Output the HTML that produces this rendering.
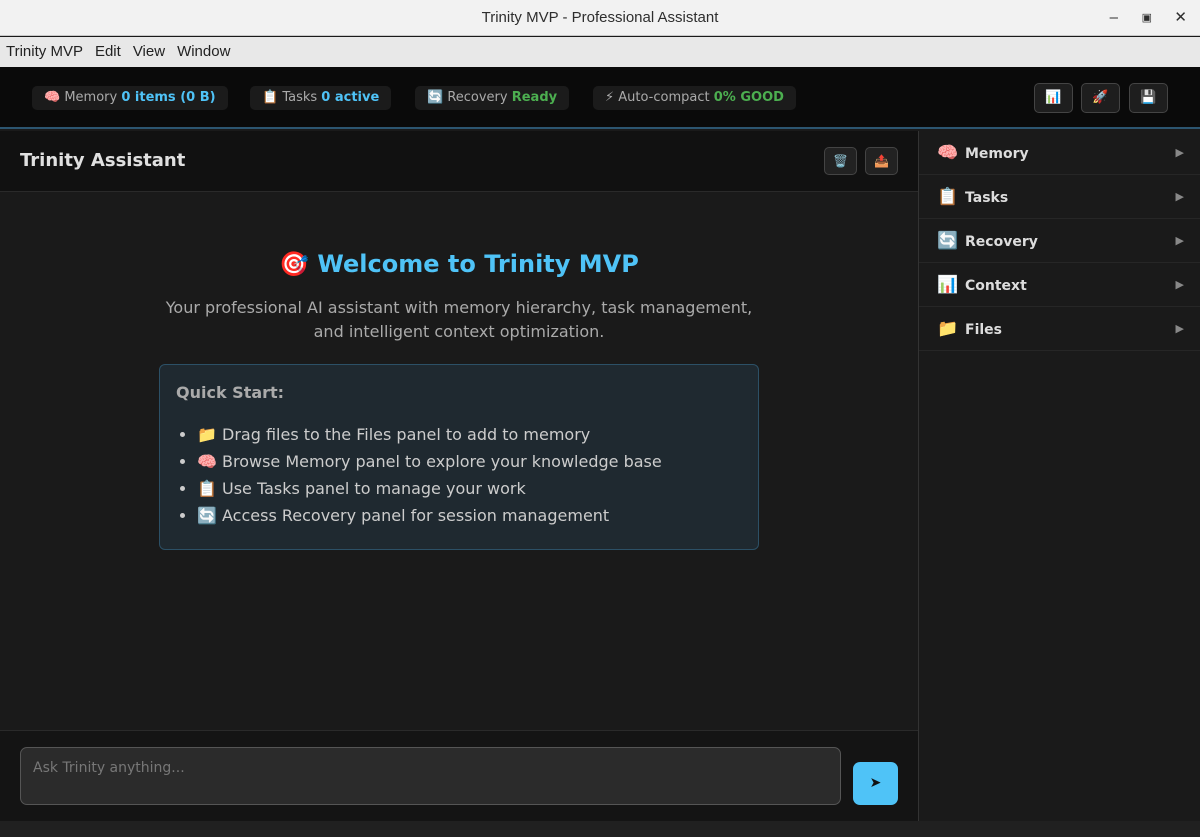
<!DOCTYPE html>
<html><head><meta charset="utf-8"><style>
*{box-sizing:border-box;margin:0;padding:0}
body{width:1200px;height:837px;overflow:hidden;background:#1a1a1a;font-family:"DejaVu Sans","Liberation Sans",sans-serif;position:relative}
.a{position:absolute}
.tb{left:0;top:0;width:1200px;height:36px;background:#f2f2f2;border-bottom:1px solid #c8c8c8;font-family:"Liberation Sans",sans-serif;font-size:15px;color:#2e2e2e;text-align:center;line-height:36px}
.mb{left:0;top:37px;width:1200px;height:30px;background:#e8e8e8;font-family:"Liberation Sans",sans-serif;font-size:15px;color:#222;line-height:30px;padding-left:6px}
.mb span{margin-right:12px}
.hd{left:0;top:67px;width:1200px;height:62px;background:#0a0a0a;border-bottom:2px solid #2c5570}
.pill{top:19px;height:24px;background:#1b1b1b;border-radius:5px;font-size:13px;color:#aaa;line-height:24px;padding:0 12px;white-space:nowrap}
.b{color:#4fc3f7;font-weight:bold}.g{color:#4caf50;font-weight:bold}
.hb{top:16px;width:39px;height:30px;border:1px solid #444;border-radius:5px;background:#1e1e1e;font-size:13px;text-align:center;line-height:28px}
.ch{left:0;top:131px;width:918px;height:61px;background:#111;border-bottom:1px solid #2a2a2a}
.sb{left:918px;top:131px;width:282px;height:690px;background:#1a1a1a;border-left:1px solid #333}
.it{height:44px;border-bottom:1px solid #262626;font-size:14px;font-weight:bold;color:#ddd;line-height:44px;padding-left:18px;position:relative}
.it em{font-style:normal;display:inline-block;width:28px;font-size:17px;font-weight:normal}
.it i{font-style:normal;position:absolute;right:16px;color:#888;font-size:11px}
.sm{width:33px;height:28px;border:1px solid #444;border-radius:5px;background:#222;top:16px;font-size:12px;text-align:center;line-height:26px}
</style></head><body>
<div class="a tb">Trinity MVP - Professional Assistant
<span style="position:absolute;right:82px;top:0">–</span><span style="position:absolute;right:48px;top:0;font-size:11px">▣</span><span style="position:absolute;right:13px;top:0">✕</span></div>
<div class="a mb"><span>Trinity MVP</span><span>Edit</span><span>View</span><span>Window</span></div>
<div class="a hd">
<div class="a pill" style="left:32px">🧠 Memory <span class="b">0 items (0 B)</span></div>
<div class="a pill" style="left:250px">📋 Tasks <span class="b">0 active</span></div>
<div class="a pill" style="left:415px">🔄 Recovery <span class="g">Ready</span></div>
<div class="a pill" style="left:593px">⚡ Auto-compact <span class="g">0% GOOD</span></div>
<div class="a hb" style="left:1034px">📊</div>
<div class="a hb" style="left:1081px">🚀</div>
<div class="a hb" style="left:1129px">💾</div>
</div>
<div class="a ch"><div class="a" style="left:20px;top:19px;font-size:18px;font-weight:bold;color:#e0e0e0">Trinity Assistant</div>
<div class="a sm" style="left:824px">🗑️</div><div class="a sm" style="left:865px">📤</div></div>
<div class="a" style="left:0;top:250px;width:918px;text-align:center;font-size:24px;font-weight:bold;color:#4fc3f7">🎯 Welcome to Trinity MVP</div>
<div class="a" style="left:0;top:296px;width:918px;text-align:center;font-size:16px;color:#aaa;line-height:24px">Your professional AI assistant with memory hierarchy, task management,<br>and intelligent context optimization.</div>
<div class="a" style="left:159px;top:364px;width:600px;height:186px;background:#1f2930;border:1px solid #2c5066;border-radius:6px">
<div class="a" style="left:16px;top:18px;font-size:16px;font-weight:bold;color:#aaa">Quick Start:</div>
<ul class="a" style="left:37px;top:56px;font-size:16px;color:#ccc;line-height:27px">
<li>📁 Drag files to the Files panel to add to memory</li>
<li>🧠 Browse Memory panel to explore your knowledge base</li>
<li>📋 Use Tasks panel to manage your work</li>
<li>🔄 Access Recovery panel for session management</li></ul></div>
<div class="a" style="left:0;top:730px;width:918px;height:91px;background:#141414;border-top:1px solid #2a2a2a">
<div class="a" style="left:20px;top:16px;width:821px;height:58px;background:#2b2b2b;border:1px solid #555;border-radius:7px;padding:12px;font-size:14px;color:#777">Ask Trinity anything...</div>
<div class="a" style="left:853px;top:31px;width:45px;height:43px;background:#4fc3f7;border-radius:7px;text-align:center;line-height:43px;font-size:14px;color:#111">➤</div></div>
<div class="a" style="left:0;top:821px;width:1200px;height:16px;background:#202020"></div>
<div class="a sb">
<div class="it"><em>🧠</em>Memory<i>▶</i></div>
<div class="it"><em>📋</em>Tasks<i>▶</i></div>
<div class="it"><em>🔄</em>Recovery<i>▶</i></div>
<div class="it"><em>📊</em>Context<i>▶</i></div>
<div class="it"><em>📁</em>Files<i>▶</i></div>
</div>
</body></html>
